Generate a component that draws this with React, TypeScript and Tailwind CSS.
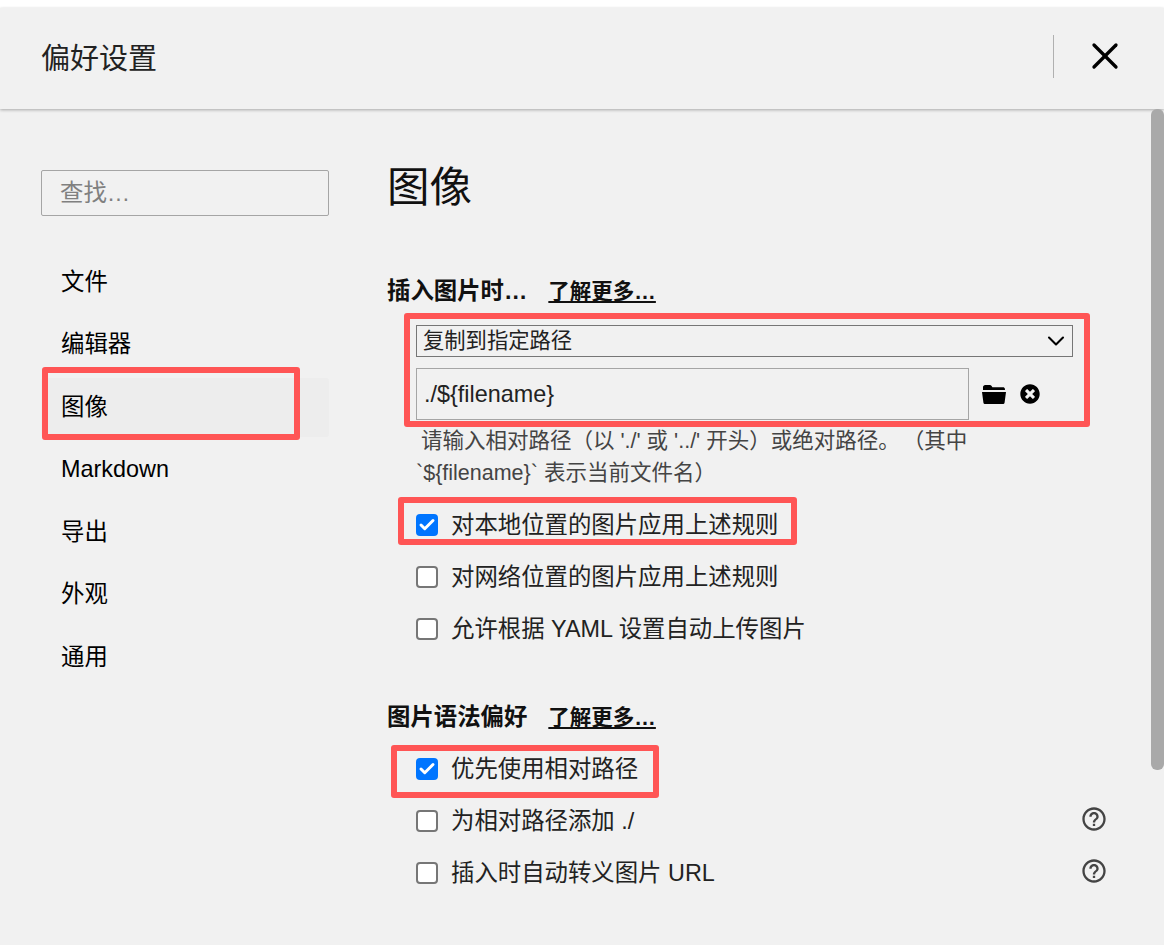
import { X, ChevronDown, Check } from 'lucide-react'
import { FaTimesCircle } from 'react-icons/fa'
import { MdHelpOutline } from 'react-icons/md'

const NAV_ITEMS = ['文件', '编辑器', '图像', 'Markdown', '导出', '外观', '通用']

function CheckRow({ label, checked, help }: { label: string; checked?: boolean; help?: boolean }) {
  return (
    <div className="h-[52px] flex items-center pl-[29px] pr-[56px]">
      {checked ? (
        <span className="w-[22px] h-[22px] mb-[3px] rounded-[4px] bg-[#0075ff] flex items-center justify-center shrink-0">
          <Check className="w-[18px] h-[18px] text-white" strokeWidth={4} />
        </span>
      ) : (
        <span className="w-[22px] h-[22px] mb-[3px] rounded-[4px] bg-white border-2 border-[#767676] shrink-0" />
      )}
      <span className="ml-[13px] text-[23.4px] text-[#222] leading-none">{label}</span>
      {help && <MdHelpOutline className="ml-auto mb-[6px] w-[28px] h-[28px] text-[#444]" />}
    </div>
  )
}

function FolderIcon() {
  return (
    <svg viewBox="0 0 24 19" className="ml-[13px] w-[24px] h-[19px] text-black" fill="currentColor">
      <path d="M1 5V2.2C1 1 2 0 3.2 0h4.6c.8 0 1.4.4 1.8 1l.8 1.2H21c1 0 1.8.7 1.9 1.6L23 5H1z" />
      <path d="M0 7h24l-1.4 10.4c-.1.9-.9 1.6-1.9 1.6H3.3c-1 0-1.8-.7-1.9-1.6L0 7z" />
    </svg>
  )
}

export default function App() {
  return (
    <div
      className="relative w-[1164px] h-[945px] overflow-hidden bg-white flex flex-col pt-2 text-black"
      style={{ fontFamily: '"Liberation Sans", "Noto Sans CJK SC", sans-serif' }}
    >
      {/* Title bar */}
      <div className="h-[101px] shrink-0 bg-[#f1f1f1] flex items-center justify-between pl-[41px] pr-[37px] shadow-[0_1px_3px_rgba(0,0,0,0.3)] z-10">
        <h1 className="text-[29px] font-normal text-[#222] pt-[2px]">偏好设置</h1>
        <div className="flex items-center mb-[5px]">
          <div className="w-px h-[43px] bg-[#b0b0b0] mr-[29px]" />
          <X className="w-[44px] h-[44px] text-black" strokeWidth={1.8} />
        </div>
      </div>

      <div className="flex-1 bg-[#f1f1f1] flex min-h-0">
        {/* Sidebar */}
        <div className="w-[387px] shrink-0 pl-[41px] pt-[61px]">
          <div className="w-[288px] h-[46px] border border-[#a5a5a5] rounded-[2px] flex items-center pl-[18px] pt-[2px] text-[23.4px] text-[#808080]">
            查找…
          </div>
          <div className="w-[288px] mt-[37px] flex flex-col gap-[3.5px]">
            {NAV_ITEMS.map(item => (
              <div
                key={item}
                className={`h-[59px] flex items-center pl-[20px] text-[23.4px] rounded-[3px] ${item === '图像' ? 'bg-[#ededed]' : ''}`}
              >
                {item}
              </div>
            ))}
          </div>
        </div>

        {/* Main panel */}
        <div className="flex-1 pt-[49px]">
          <h2 className="text-[42.5px] font-normal leading-[60px] text-[#111]">图像</h2>

          <div className="mt-[58px] h-[32px] flex items-center text-[23.4px] font-bold text-[#111]">
            <span>插入图片时…</span>
            <span className="ml-[21px] text-[21.5px] underline">了解更多…</span>
          </div>

          <div className="mt-[17px] ml-[29px] w-[657px] h-[32px] border border-[#767676] flex items-center justify-between pl-[6px] pr-[2px] text-[21.3px] text-[#222]">
            <span className="pt-[2px]">复制到指定路径</span>
            <ChevronDown className="w-[28px] h-[28px] text-black" strokeWidth={1.8} />
          </div>

          <div className="mt-[11px] ml-[29px] flex items-center">
            <div className="w-[553px] h-[52px] border border-[#a5a5a5] flex items-center pl-[7px] pt-[2px] text-[23.4px] text-[#222]">
              ./{'${filename}'}
            </div>
            <FolderIcon />
            <FaTimesCircle className="ml-[14px] w-[20px] h-[20px] text-black" />
          </div>

          <div className="ml-[29px] mt-[5px] w-[600px] text-[21.5px] leading-[32px] text-[#444] [text-spacing-trim:space-all]">
            <div className="pl-[5px]">
              请输入相对路径（以 './' 或 '../' 开头）或绝对路径。<span className="ml-[3px]">（其中</span>
            </div>
            <div>`{'${filename}'}` 表示当前文件名）</div>
          </div>

          <div className="mt-[11px]">
            <CheckRow label="对本地位置的图片应用上述规则" checked />
            <CheckRow label="对网络位置的图片应用上述规则" />
            <CheckRow label="允许根据 YAML 设置自动上传图片" />
          </div>

          <div className="mt-[46px] h-[32px] flex items-center text-[23.4px] font-bold text-[#111]">
            <span>图片语法偏好</span>
            <span className="ml-[21px] text-[21.5px] underline">了解更多…</span>
          </div>

          <div className="mt-[10px]">
            <CheckRow label="优先使用相对路径" checked />
            <CheckRow label="为相对路径添加 ./" help />
            <CheckRow label="插入时自动转义图片 URL" help />
          </div>
        </div>
      </div>

      {/* Scrollbar thumb */}
      <div className="absolute right-0 top-[109px] w-[13px] h-[661px] bg-[#a9a9a9] rounded-[6px] z-20" />

      {/* Red annotation boxes */}
      <div className="absolute left-[42px] top-[367px] w-[258px] h-[73px] border-[6px] border-[#ff5555] rounded-[3px]" />
      <div className="absolute left-[404px] top-[313px] w-[686px] h-[114px] border-[6px] border-[#ff5555] rounded-[3px]" />
      <div className="absolute left-[398px] top-[497px] w-[399px] h-[48px] border-[6px] border-[#ff5555] rounded-[3px]" />
      <div className="absolute left-[391px] top-[745px] w-[268px] h-[53px] border-[6px] border-[#ff5555] rounded-[3px]" />
    </div>
  )
}
